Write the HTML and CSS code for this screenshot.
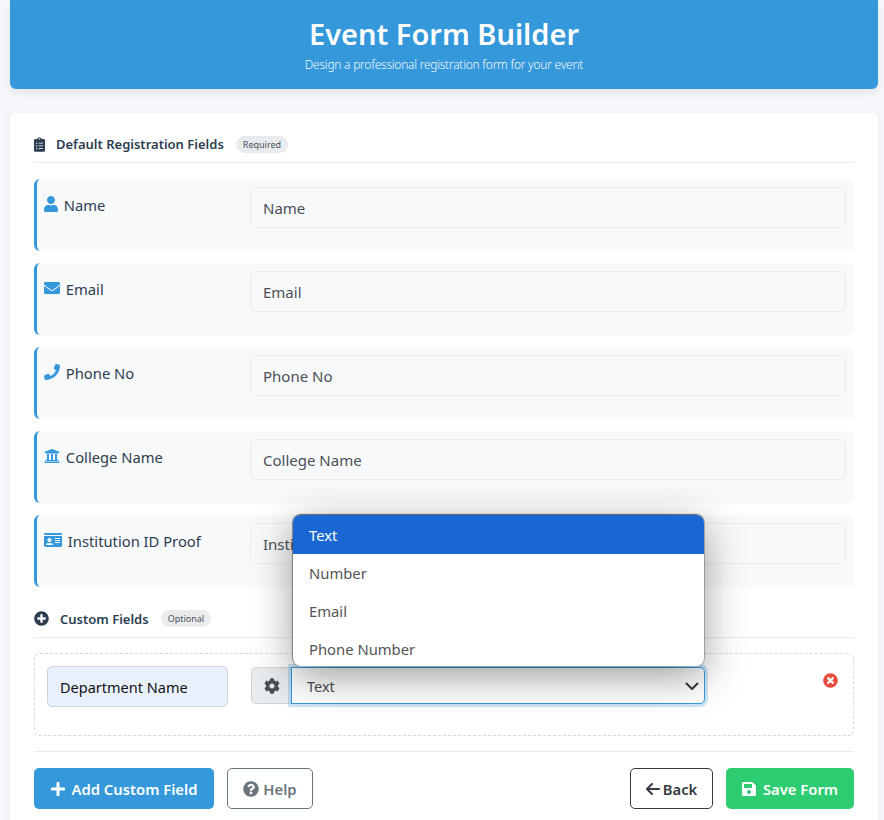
FILE: index.html
```html
<!DOCTYPE html>
<html lang="en">
<head>
    <meta charset="UTF-8">
    <meta name="viewport" content="width=device-width, initial-scale=1.0">
    <title>Event Form Builder</title>
    <link rel="stylesheet" href="styles.css">
</head>
<body>
    <header class="page-header">
        <h1>Event Form Builder</h1>
        <p>Design a professional registration form for your event</p>
    </header>

    <main class="card">
        <div class="section-title">
            <svg class="section-icon" viewBox="0 0 384 512"><path d="M336 64h-80c0-35.3-28.7-64-64-64s-64 28.7-64 64H48C21.5 64 0 85.5 0 112v352c0 26.5 21.5 48 48 48h288c26.5 0 48-21.5 48-48V112c0-26.5-21.5-48-48-48zM96 424c-13.3 0-24-10.7-24-24s10.7-24 24-24 24 10.7 24 24-10.7 24-24 24zm0-96c-13.3 0-24-10.7-24-24s10.7-24 24-24 24 10.7 24 24-10.7 24-24 24zm0-96c-13.3 0-24-10.7-24-24s10.7-24 24-24 24 10.7 24 24-10.7 24-24 24zm96-192c13.3 0 24 10.7 24 24s-10.7 24-24 24-24-10.7-24-24 10.7-24 24-24zm128 368c0 4.4-3.6 8-8 8H168c-4.4 0-8-3.6-8-8v-16c0-4.4 3.6-8 8-8h144c4.4 0 8 3.6 8 8v16zm0-96c0 4.4-3.6 8-8 8H168c-4.4 0-8-3.6-8-8v-16c0-4.4 3.6-8 8-8h144c4.4 0 8 3.6 8 8v16zm0-96c0 4.4-3.6 8-8 8H168c-4.4 0-8-3.6-8-8v-16c0-4.4 3.6-8 8-8h144c4.4 0 8 3.6 8 8v16z"/></svg>
            <span class="section-name">Default Registration Fields</span>
            <span class="badge">Required</span>
        </div>

        <div class="field-row">
            <label class="field-label">
                <svg class="field-icon" viewBox="0 0 448 512"><path d="M224 256c70.7 0 128-57.3 128-128S294.7 0 224 0 96 57.3 96 128s57.3 128 128 128zm89.6 32h-16.7c-22.2 10.2-46.9 16-72.9 16s-50.6-5.8-72.9-16h-16.7C60.2 288 0 348.2 0 422.4V464c0 26.5 21.5 48 48 48h352c26.5 0 48-21.5 48-48v-41.6c0-74.2-60.2-134.4-134.4-134.4z"/></svg>
                Name
            </label>
            <input class="field-input" type="text" value="Name" readonly>
        </div>

        <div class="field-row">
            <label class="field-label">
                <svg class="field-icon" viewBox="0 0 512 512"><path d="M502.3 190.8c3.9-3.1 9.7-.2 9.7 4.7V400c0 26.5-21.5 48-48 48H48c-26.5 0-48-21.5-48-48V195.6c0-5 5.7-7.8 9.7-4.7 22.4 17.4 52.1 39.5 154.1 113.6 21.1 15.4 56.7 47.8 92.2 47.6 35.7.3 72-32.8 92.3-47.6 102-74.1 131.6-96.3 154-113.7zM256 320c23.2.4 56.6-29.2 73.4-41.4 132.7-96.3 142.8-104.7 173.4-128.7 5.8-4.5 9.2-11.5 9.2-18.9v-19c0-26.5-21.5-48-48-48H48C21.5 64 0 85.5 0 112v19c0 7.4 3.4 14.3 9.2 18.9 30.6 23.9 40.7 32.4 173.4 128.7 16.8 12.2 50.2 41.8 73.4 41.4z"/></svg>
                Email
            </label>
            <input class="field-input" type="text" value="Email" readonly>
        </div>

        <div class="field-row">
            <label class="field-label">
                <svg class="field-icon" viewBox="0 0 512 512"><path d="M493.4 24.6l-104-24c-11.3-2.6-22.9 3.3-27.5 13.9l-48 112c-4.2 9.8-1.4 21.3 6.9 28l60.6 49.6c-36 76.7-98.9 140.5-177.2 177.2l-49.6-60.6c-6.8-8.3-18.2-11.1-28-6.9l-112 48C3.9 366.5-2 378.1.6 389.4l24 104C27.1 504.2 36.7 512 48 512c256.1 0 464-207.5 464-464 0-11.2-7.7-20.9-18.6-23.4z"/></svg>
                Phone No
            </label>
            <input class="field-input" type="text" value="Phone No" readonly>
        </div>

        <div class="field-row">
            <label class="field-label">
                <svg class="field-icon" viewBox="0 0 512 512"><path d="M496 128v16a8 8 0 0 1-8 8h-24v12c0 6.627-5.373 12-12 12H60c-6.627 0-12-5.373-12-12v-12H24a8 8 0 0 1-8-8v-16a8 8 0 0 1 4.941-7.392l232-88a7.996 7.996 0 0 1 6.118 0l232 88A8 8 0 0 1 496 128zm-24 304H40c-13.255 0-24 10.745-24 24v16a8 8 0 0 0 8 8h464a8 8 0 0 0 8-8v-16c0-13.255-10.745-24-24-24zM96 192v192H60c-6.627 0-12 5.373-12 12v20h416v-20c0-6.627-5.373-12-12-12h-36V192h-64v192h-64V192h-64v192h-64V192H96z"/></svg>
                College Name
            </label>
            <input class="field-input" type="text" value="College Name" readonly>
        </div>

        <div class="field-row">
            <label class="field-label">
                <svg class="field-icon" viewBox="0 0 576 512"><path d="M528 32H48C21.5 32 0 53.5 0 80v16h576V80c0-26.5-21.5-48-48-48zM0 432c0 26.5 21.5 48 48 48h480c26.5 0 48-21.5 48-48V128H0v304zm352-232c0-4.4 3.6-8 8-8h144c4.4 0 8 3.6 8 8v16c0 4.4-3.6 8-8 8H360c-4.4 0-8-3.6-8-8v-16zm0 64c0-4.4 3.6-8 8-8h144c4.4 0 8 3.6 8 8v16c0 4.4-3.6 8-8 8H360c-4.4 0-8-3.6-8-8v-16zm0 64c0-4.4 3.6-8 8-8h144c4.4 0 8 3.6 8 8v16c0 4.4-3.6 8-8 8H360c-4.4 0-8-3.6-8-8v-16zM176 192c35.3 0 64 28.7 64 64s-28.7 64-64 64-64-28.7-64-64 28.7-64 64-64zM67.1 396.2C75.5 370.5 99.6 352 128 352h8.2c12.3 5.1 25.7 8 39.8 8s27.6-2.9 39.8-8h8.2c28.4 0 52.5 18.5 60.9 44.2 3.2 9.9-5.2 19.8-15.6 19.8H82.7c-10.4 0-18.8-10-15.6-19.8z"/></svg>
                Institution ID Proof
            </label>
            <input class="field-input" type="text" value="Institution ID Proof" readonly>
        </div>

        <div class="section-title custom-title">
            <svg class="section-icon circle-icon" viewBox="0 0 512 512"><path d="M256 8C119 8 8 119 8 256s111 248 248 248 248-111 248-248S393 8 256 8zm144 276c0 6.6-5.4 12-12 12h-92v92c0 6.6-5.4 12-12 12h-56c-6.6 0-12-5.4-12-12v-92h-92c-6.6 0-12-5.4-12-12v-56c0-6.6 5.4-12 12-12h92v-92c0-6.6 5.4-12 12-12h56c6.6 0 12 5.4 12 12v92h92c6.6 0 12 5.4 12 12v56z"/></svg>
            <span class="section-name">Custom Fields</span>
            <span class="badge">Optional</span>
        </div>

        <div class="custom-field">
            <input class="custom-name" type="text" value="Department Name">
            <div class="type-group">
                <span class="type-addon">
                    <svg viewBox="0 0 512 512"><path d="M487.4 315.7l-42.6-24.6c4.3-23.2 4.3-47 0-70.2l42.6-24.6c4.9-2.8 7.1-8.6 5.5-14-11.1-35.6-30-67.8-54.7-94.6-3.8-4.1-10-5.1-14.8-2.3L380.8 110c-17.9-15.4-38.5-27.3-60.8-35.1V25.8c0-5.6-3.9-10.5-9.4-11.7-36.7-8.2-74.3-7.8-109.2 0-5.5 1.2-9.4 6.1-9.4 11.7V75c-22.2 7.9-42.8 19.8-60.8 35.1L88.7 85.5c-4.9-2.8-11-1.9-14.8 2.3-24.7 26.7-43.6 58.9-54.7 94.6-1.7 5.4.6 11.2 5.5 14L67.3 221c-4.3 23.2-4.3 47 0 70.2l-42.6 24.6c-4.9 2.8-7.1 8.6-5.5 14 11.1 35.6 30 67.8 54.7 94.6 3.8 4.1 10 5.1 14.8 2.3l42.6-24.6c17.9 15.4 38.5 27.3 60.8 35.1v49.2c0 5.6 3.9 10.5 9.4 11.7 36.7 8.2 74.3 7.8 109.2 0 5.5-1.2 9.4-6.1 9.4-11.7v-49.2c22.2-7.9 42.8-19.8 60.8-35.1l42.6 24.6c4.9 2.8 11 1.9 14.8-2.3 24.7-26.7 43.6-58.9 54.7-94.6 1.5-5.5-.7-11.3-5.6-14.1zM256 336c-44.1 0-80-35.9-80-80s35.9-80 80-80 80 35.9 80 80-35.9 80-80 80z"/></svg>
                </span>
                <div class="type-select">
                    <span>Text</span>
                    <svg class="chevron" viewBox="0 0 16 16"><path d="M2.5 5.5L8 11l5.5-5.5" fill="none" stroke="#343a40" stroke-width="2" stroke-linecap="round" stroke-linejoin="round"/></svg>
                    <div class="type-menu">
                        <div class="type-option selected">Text</div>
                        <div class="type-option">Number</div>
                        <div class="type-option">Email</div>
                        <div class="type-option">Phone Number</div>
                    </div>
                </div>
            </div>
            <svg class="remove-icon" viewBox="0 0 512 512"><path d="M256 8C119 8 8 119 8 256s111 248 248 248 248-111 248-248S393 8 256 8zm121.6 313.1c4.7 4.7 4.7 12.3 0 17L338 377.6c-4.7 4.7-12.3 4.7-17 0L256 312l-65.1 65.6c-4.7 4.7-12.3 4.7-17 0L134.4 338c-4.7-4.7-4.7-12.3 0-17l65.6-65-65.6-65.1c-4.7-4.7-4.7-12.3 0-17l39.6-39.6c4.7-4.7 12.3-4.7 17 0l65 65.7 65.1-65.6c4.7-4.7 12.3-4.7 17 0l39.6 39.6c4.7 4.7 4.7 12.3 0 17L312 256l65.6 65.1z"/></svg>
        </div>

        <div class="actions">
            <button class="btn btn-add">
                <svg viewBox="0 0 448 512"><path d="M416 208H272V64c0-17.67-14.33-32-32-32h-32c-17.67 0-32 14.33-32 32v144H32c-17.67 0-32 14.33-32 32v32c0 17.67 14.33 32 32 32h144v144c0 17.67 14.33 32 32 32h32c17.67 0 32-14.33 32-32V304h144c17.67 0 32-14.33 32-32v-32c0-17.67-14.33-32-32-32z"/></svg>
                Add Custom Field
            </button>
            <button class="btn btn-help">
                <svg viewBox="0 0 512 512"><path d="M504 256c0 136.997-111.043 248-248 248S8 392.997 8 256C8 119.083 119.043 8 256 8s248 111.083 248 248zM262.655 90c-54.497 0-89.255 22.957-116.549 63.758-3.536 5.286-2.353 12.415 2.715 16.258l34.699 26.31c5.205 3.947 12.621 3.008 16.665-2.122 17.864-22.658 30.113-35.797 57.303-35.797 20.429 0 45.698 13.148 45.698 32.958 0 14.976-12.363 22.667-32.534 33.976C247.128 238.528 216 254.941 216 296v4c0 6.627 5.373 12 12 12h56c6.627 0 12-5.373 12-12v-1.333c0-28.462 83.186-29.647 83.186-106.667 0-58.002-60.165-102-116.531-102zM256 338c-25.365 0-46 20.635-46 46 0 25.364 20.635 46 46 46s46-20.636 46-46c0-25.365-20.635-46-46-46z"/></svg>
                Help
            </button>
            <button class="btn btn-back">
                <svg viewBox="0 0 448 512"><path d="M9.4 233.4c-12.5 12.5-12.5 32.8 0 45.3l160 160c12.5 12.5 32.8 12.5 45.3 0s12.5-32.8 0-45.3L109.2 288 416 288c17.7 0 32-14.3 32-32s-14.3-32-32-32l-306.7 0L214.6 118.6c12.5-12.5 12.5-32.8 0-45.3s-32.8-12.5-45.3 0l-160 160z"/></svg>
                Back
            </button>
            <button class="btn btn-save">
                <svg viewBox="0 0 448 512"><path d="M433.941 129.941l-83.882-83.882A48 48 0 0 0 316.118 32H48C21.49 32 0 53.49 0 80v352c0 26.51 21.49 48 48 48h352c26.51 0 48-21.49 48-48V163.882a48 48 0 0 0-14.059-33.941zM224 416c-35.346 0-64-28.654-64-64 0-35.346 28.654-64 64-64s64 28.654 64 64c0 35.346-28.654 64-64 64zm96-304.52V212c0 6.627-5.373 12-12 12H76c-6.627 0-12-5.373-12-12V108c0-6.627 5.373-12 12-12h228.52c3.183 0 6.235 1.264 8.485 3.515l3.48 3.48A11.996 11.996 0 0 1 320 111.48z"/></svg>
                Save Form
            </button>
        </div>
    </main>
</body>
</html>
```

FILE: styles.css
```css
* {
    box-sizing: border-box;
}

html {
    overflow: hidden;
}

body {
    font-family: "Noto Sans", "Open Sans", Arial, sans-serif;
    background-color: #f5f7fa;
    color: #2c3e50;
    margin: 0;
    padding: 0 6px 0 10px;
}

.page-header {
    background-color: #3498db;
    color: #fff;
    height: 89px;
    padding-top: 14px;
    border-radius: 0 0 6px 6px;
    box-shadow: 0 4px 8px rgba(0, 0, 0, 0.08);
    text-align: center;
}

.page-header h1 {
    margin: 0;
    font-size: 29px;
    line-height: 40px;
    font-weight: 600;
}

.page-header p {
    margin: 2px 0 0;
    font-size: 12px;
    line-height: 18px;
    letter-spacing: -0.25px;
    font-weight: 300;
    opacity: 0.95;
}

.card {
    background-color: #fff;
    margin-top: 24px;
    padding: 21px 24px 24px;
    border-radius: 6px;
    box-shadow: 0 2px 10px rgba(0, 0, 0, 0.05);
}

.section-title {
    display: flex;
    align-items: center;
    height: 29px;
    margin-bottom: 16px;
    border-bottom: 1px solid #e9ecef;
    padding-bottom: 8px;
}

.custom-title {
    height: 30px;
    margin-top: 21px;
    margin-bottom: 15px;
    padding-bottom: 8px;
}

.section-icon {
    height: 15px;
    width: 11px;
    fill: #2c3e50;
    flex: none;
    margin-right: 11px;
}

.circle-icon {
    width: 15px;
    margin-right: 11px;
}

.section-name {
    font-size: 13px;
    font-weight: 600;
    margin-right: 12px;
}

.badge {
    background-color: #e9ecef;
    color: #495057;
    font-size: 9px;
    line-height: 17px;
    padding: 0 7px;
    border-radius: 9px;
}

.field-row {
    display: flex;
    height: 72px;
    margin-bottom: 12px;
    padding: 8px 8px 0 0;
    background-color: #f8f9fa;
    border-left: 3px solid #3498db;
    border-radius: 6px;
}

.field-label {
    width: 213px;
    flex: none;
    padding: 8px 0 0 7px;
    font-size: 14.75px;
    line-height: 20px;
}

.field-icon {
    height: 16px;
    width: auto;
    fill: #3498db;
    margin-right: 2px;
    vertical-align: -1px;
}

.field-input {
    flex: 1;
    height: 41px;
    padding: 0 12px;
    font-family: inherit;
    font-size: 15px;
    color: #495057;
    background-color: #f8f9fa;
    border: 1px solid #e9ecef;
    border-radius: 5px;
}

.custom-field {
    display: flex;
    align-items: flex-start;
    height: 83px;
    padding: 12px 15px 0 12px;
    border: 1px dashed #d5d8dc;
    border-radius: 6px;
}

.custom-name {
    width: 181px;
    height: 41px;
    padding: 0 12px;
    font-family: inherit;
    font-size: 14.5px;
    color: #111;
    background-color: #e8f0fe;
    border: 1px solid #ced4da;
    border-radius: 5px;
}

.type-group {
    display: flex;
    margin: 1px 0 0 23px;
    height: 37px;
}

.type-addon {
    width: 40px;
    display: flex;
    align-items: center;
    justify-content: center;
    background-color: #e9ecef;
    border: 1px solid #ced4da;
    border-right: none;
    border-radius: 5px 0 0 5px;
}

.type-addon svg {
    width: 16px;
    height: 16px;
    fill: #495057;
}

.type-select {
    position: relative;
    width: 414px;
    display: flex;
    align-items: center;
    justify-content: space-between;
    padding: 0 4px 0 15px;
    font-size: 14.5px;
    color: #495057;
    background-color: #fff;
    border: 1px solid #3498db;
    border-radius: 0 5px 5px 0;
    box-shadow: 0 0 0 3px rgba(52, 152, 219, 0.25);
}

.chevron {
    width: 16px;
    height: 16px;
}

.type-menu {
    position: absolute;
    left: 1px;
    right: 0;
    bottom: 37px;
    height: 151px;
    overflow: hidden;
    background-color: #fff;
    border-radius: 8px;
    box-shadow: 0 -1px 1px rgba(0, 0, 0, 0.55), -1px 0 1px rgba(0, 0, 0, 0.35), 1px 0 1px rgba(0, 0, 0, 0.2), 0 10px 40px rgba(0, 0, 0, 0.4);
}

.type-option {
    height: 38px;
    line-height: 38px;
    padding-left: 16px;
    font-size: 14.8px;
    color: #555;
}

.type-option.selected {
    height: 39px;
    padding-top: 1px;
    background-color: #1967d2;
    color: #fff;
}

.remove-icon {
    width: 15px;
    height: 15px;
    fill: #e74c3c;
    margin: 7px 0 0 auto;
}

.actions {
    display: flex;
    gap: 13px;
    margin-top: 15px;
    padding-top: 16px;
    border-top: 1px solid #e9ecef;
}

.btn {
    display: flex;
    align-items: center;
    justify-content: center;
    height: 41px;
    font-family: inherit;
    font-size: 14.8px;
    font-weight: 600;
    border-radius: 5px;
    border: 1px solid transparent;
    cursor: pointer;
}

.btn svg {
    height: 16px;
    width: auto;
    fill: currentColor;
    margin-right: 7px;
}

.btn-add {
    width: 180px;
    background-color: #3498db;
    color: #fff;
}

.btn-help {
    width: 86px;
    background-color: #fff;
    color: #6c757d;
    border-color: #6c757d;
}

.btn-help svg {
    margin-right: 4px;
}

.btn-back {
    width: 83px;
    margin-left: auto;
    background-color: #fff;
    color: #343a40;
    border-color: #343a40;
}

.btn-back svg {
    margin-right: 3px;
}

.btn-save {
    width: 128px;
    background-color: #2ecc71;
    color: #fff;
}
```
